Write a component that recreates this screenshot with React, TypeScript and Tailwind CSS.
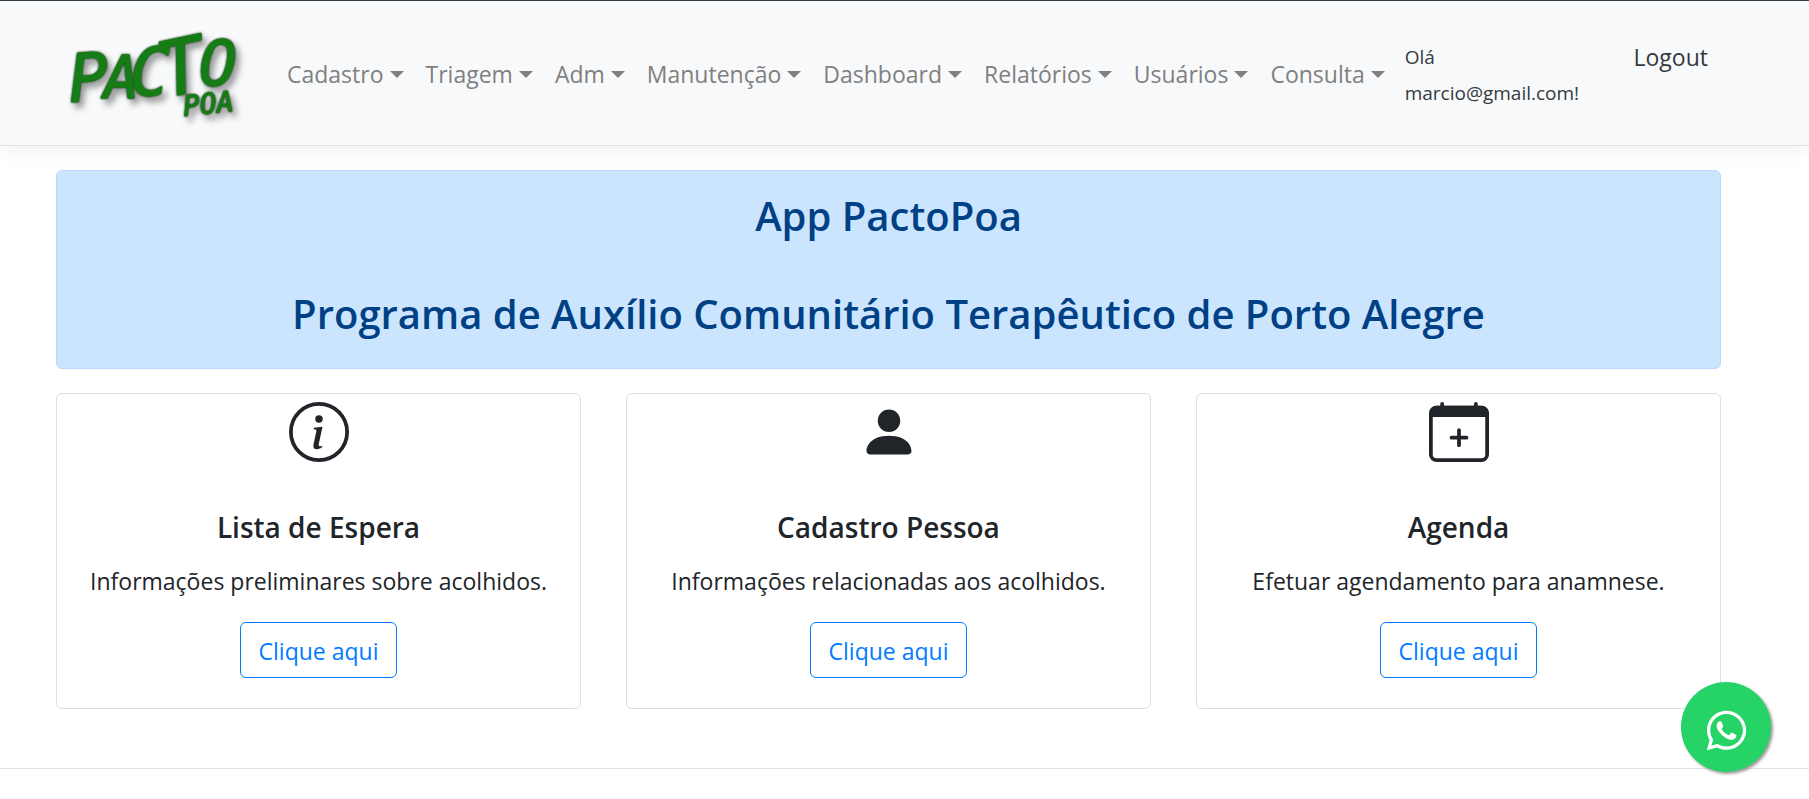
import React from "react";
import { FaWhatsapp } from "react-icons/fa";

const menus = ["Cadastro", "Triagem", "Adm", "Manutenção", "Dashboard", "Relatórios", "Usuários", "Consulta"];

function Logo() {
  return (
    <svg
      viewBox="0 0 192 96"
      className="h-24 w-48 overflow-visible [filter:drop-shadow(0_0_1px_#0a220a)_drop-shadow(4px_5px_3px_rgba(0,0,0,0.4))]"
      role="img"
      aria-label="Pacto Poa"
      fontFamily="'DejaVu Sans Mono',monospace"
      fontStyle="italic"
      fill="#167d16"
      stroke="#167d16"
      strokeWidth="1.4"
      strokeLinejoin="bevel"
    >
      <text fontSize="66" transform="translate(0 77) rotate(-4)">P</text>
      <text fontSize="58" transform="translate(34 73)">A</text>
      <text fontSize="66" transform="translate(60 70)">C</text>
      <text fontSize="76" transform="translate(94 73) rotate(-12)">T</text>
      <text fontSize="63" transform="translate(129 60)">O</text>
      <text fontSize="28" strokeWidth="1" transform="translate(114 91) rotate(-6)">POA</text>
    </svg>
  );
}

function InfoIcon() {
  return (
    <svg viewBox="0 0 16 16" className="size-15" fill="currentColor" aria-hidden="true">
      <circle cx="8" cy="8" r="7.5" fill="none" stroke="currentColor" />
      <path d="M8.93 6.588l-2.29.287-.082.38.45.083c.294.07.352.176.288.469l-.738 3.468c-.194.897.105 1.319.808 1.319.545 0 1.178-.252 1.465-.598l.088-.416c-.2.176-.492.246-.686.246-.275 0-.375-.193-.304-.533L8.93 6.588z" />
      <circle cx="8" cy="4.5" r="1" />
    </svg>
  );
}

function PersonIcon() {
  return (
    <svg viewBox="0 0 16 16" className="size-15" fill="currentColor" aria-hidden="true">
      <path d="M3 14s-1 0-1-1 1-4 6-4 6 3 6 4-1 1-1 1H3zm5-6a3 3 0 1 0 0-6 3 3 0 0 0 0 6z" />
    </svg>
  );
}

function CalendarIcon() {
  return (
    <svg viewBox="0 0 16 16" className="size-15" fill="none" stroke="currentColor" aria-hidden="true">
      <rect x="0.5" y="1.5" width="15" height="14" rx="1.5" />
      <path d="M0 4V3a2 2 0 0 1 2-2h12a2 2 0 0 1 2 2v1z" fill="currentColor" stroke="none" />
      <path d="M3.5 .5V2M12.5 .5V2M8 7.5v4M6 9.5h4" strokeLinecap="round" />
    </svg>
  );
}

const cards = [
  { title: "Lista de Espera", text: "Informações preliminares sobre acolhidos.", icon: <InfoIcon /> },
  { title: "Cadastro Pessoa", text: "Informações relacionadas aos acolhidos.", icon: <PersonIcon /> },
  { title: "Agenda", text: "Efetuar agendamento para anamnese.", icon: <CalendarIcon /> },
];

export default function App() {
  return (
    <div className="bg-white font-['Open_Sans','Noto_Sans',sans-serif] text-[23px] leading-9 text-[#212529]">
      <header className="flex items-center border-t border-b border-t-[#343a40] border-b-[#dee2e6] bg-[#f8f9fa] py-6 pr-[101px] pl-[70px] shadow-[0_6px_18px_rgba(0,0,0,0.05)]">
        <a href="#inicio" className="mr-[25px] shrink-0">
          <Logo />
        </a>
        <nav className="flex gap-[22px] pt-0.5">
          {menus.map((m) => (
            <button key={m} type="button" className="flex items-center gap-1.5 text-[#7f8080]">
              {m}
              <span className="border-x-[7px] border-t-[7px] border-x-transparent border-t-[#7f8080]" />
            </button>
          ))}
        </nav>
        <div className="ml-5 flex grow items-start justify-between pt-1 text-[#343a40]">
          <p className="text-[19px]">
            Olá
            <br />
            marcio@gmail.com!
          </p>
          <button type="button">Logout</button>
        </div>
      </header>

      <main className="pt-6 pr-[88px] pb-[59px] pl-14">
        <section className="rounded-md border border-[#b8daff] bg-[#cce5ff] pt-5 pb-[17px] text-center text-[40px] leading-[50px] font-semibold text-[#004085]">
          <h1>App PactoPoa</h1>
          <h2 className="mt-12 mb-3">Programa de Auxílio Comunitário Terapêutico de Porto Alegre</h2>
        </section>
        <div className="mt-6 grid grid-cols-3 gap-[45px]">
          {cards.map((c) => (
            <article key={c.title} className="flex flex-col items-center rounded-md border border-[#dfdfdf] pt-2 pb-[30px]">
              {c.icon}
              <h3 className="mt-[47px] text-[28px] font-semibold">{c.title}</h3>
              <p className="mt-[18px]">{c.text}</p>
              <a href="#abrir" className="mt-[23px] rounded-md border border-[#007bff] px-[18px] pt-2.5 pb-2 text-[#007bff]">
                Clique aqui
              </a>
            </article>
          ))}
        </div>
      </main>
      <footer className="h-[30px] border-t border-[#dee2e6]" />

      <a
        href="#whatsapp"
        aria-label="WhatsApp"
        className="fixed right-[38px] bottom-[27px] flex size-[90px] items-center justify-center rounded-full bg-[#25d366] pt-1.5 text-white shadow-[2px_2px_3px_#999]"
      >
        <FaWhatsapp size={45} />
      </a>
    </div>
  );
}
